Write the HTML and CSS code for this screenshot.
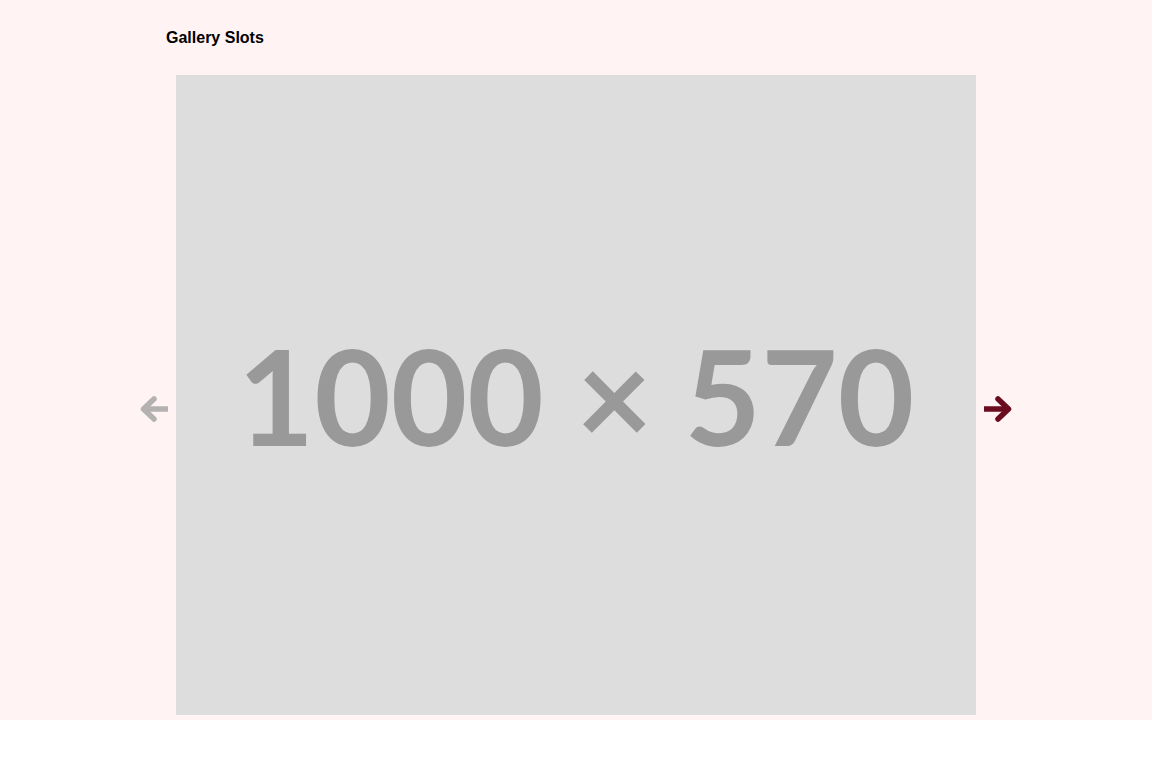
FILE: index.html
```html
<!DOCTYPE html>
<html>
<head>
<meta charset="utf-8">
<link rel="stylesheet" href="styles.css">
</head>
<body>
<div class="page">
  <h2 class="title">Gallery Slots</h2>
  <div class="gallery">
    <button class="nav nav-prev" aria-label="Previous">
      <svg width="28" height="26" viewBox="0 0 28 26"><path d="M5 13 H28" fill="none" stroke="currentColor" stroke-width="5.5"/><path d="M14 3 L3.5 13 L14 23" fill="none" stroke="currentColor" stroke-width="5.5" stroke-linecap="round" stroke-linejoin="round"/></svg>
    </button>
    <div class="slide">1000 × 570</div>
    <button class="nav nav-next" aria-label="Next">
      <svg width="28" height="26" viewBox="0 0 28 26"><path d="M23 13 H0" fill="none" stroke="currentColor" stroke-width="5.5"/><path d="M14 3 L24.5 13 L14 23" fill="none" stroke="currentColor" stroke-width="5.5" stroke-linecap="round" stroke-linejoin="round"/></svg>
    </button>
  </div>
</div>
</body>
</html>
```
FILE: styles.css
```css
html, body {
  margin: 0;
  padding: 0;
  background: #ffffff;
}
.page {
  background: #fff3f4;
  height: 720px;
  box-sizing: border-box;
  padding-top: 29px;
}
.title {
  margin: 0 0 28px 166px;
  font-family: "Liberation Sans", Arial, sans-serif;
  font-size: 16px;
  font-weight: bold;
  line-height: 18px;
  color: #000;
}
.gallery {
  display: flex;
  justify-content: center;
  align-items: center;
  gap: 8px;
}
.nav {
  background: none;
  border: 0;
  padding: 0;
  margin-top: 28px;
  width: 28px;
  height: 26px;
  display: flex;
  cursor: pointer;
}
.nav-prev {
  color: #b4b1b2;
}
.nav-next {
  color: #6b0b1f;
}
.slide {
  width: 800px;
  height: 640px;
  background: #dddddd;
  color: #999999;
  font-family: Lato, "Liberation Sans", sans-serif;
  font-weight: bold;
  font-size: 132px;
  display: flex;
  align-items: center;
  justify-content: center;
}
```
